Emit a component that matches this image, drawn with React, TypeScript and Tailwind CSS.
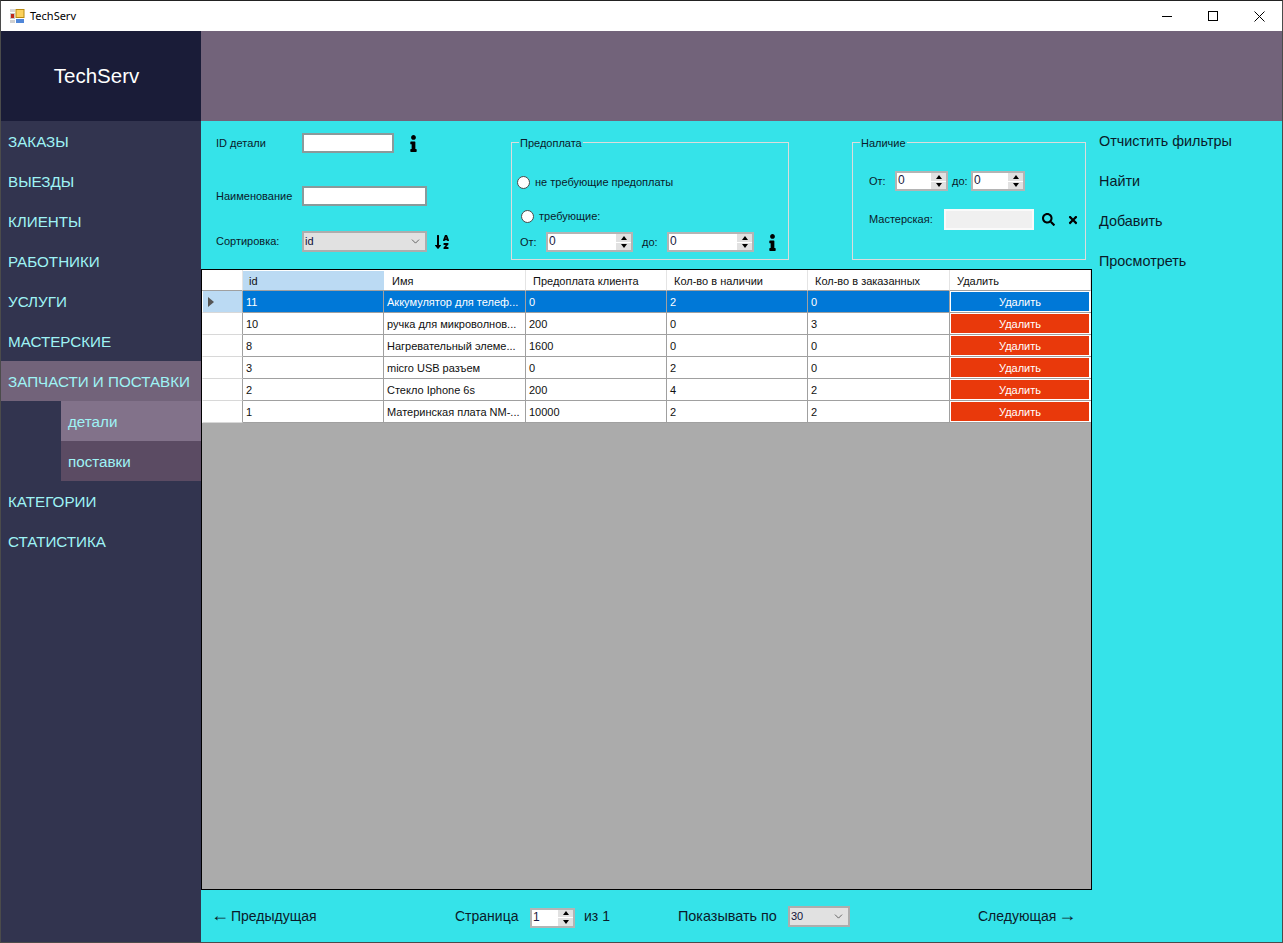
import { FaInfo, FaSearch, FaSortAlphaDown, FaTimes } from "react-icons/fa";
import { ChevronDown } from "lucide-react";

const navTop = ["ЗАКАЗЫ", "ВЫЕЗДЫ", "КЛИЕНТЫ", "РАБОТНИКИ", "УСЛУГИ", "МАСТЕРСКИЕ"];

const rows = [
  { id: "11", name: "Аккумулятор для телеф...", prepay: "0", stock: "2", ordered: "0" },
  { id: "10", name: "ручка для микроволнов...", prepay: "200", stock: "0", ordered: "3" },
  { id: "8", name: "Нагревательный элеме...", prepay: "1600", stock: "0", ordered: "0" },
  { id: "3", name: "micro USB разъем", prepay: "0", stock: "2", ordered: "0" },
  { id: "2", name: "Стекло Iphone 6s", prepay: "200", stock: "4", ordered: "2" },
  { id: "1", name: "Материнская плата NM-...", prepay: "10000", stock: "2", ordered: "2" },
];

const headers = ["id", "Имя", "Предоплата клиента", "Кол-во в наличии", "Кол-во в заказанных", "Удалить"];

const Spinner = ({ value, className }: { value: string; className: string }) => (
  <div className={`flex h-[20px] border-2 border-[#b4b4b4] bg-white ${className}`}>
    <span className="flex-1 pl-[1px] text-[12px] leading-[15px] text-[#1a1a40]">{value}</span>
    <div className="flex w-[15px] flex-col gap-[1px] bg-white">
      <div className="flex flex-1 items-center justify-center bg-[#e1e1e1]">
        <div className="h-0 w-0 border-x-[3.5px] border-b-[4px] border-x-transparent border-b-black" />
      </div>
      <div className="flex flex-1 items-center justify-center bg-[#e1e1e1]">
        <div className="h-0 w-0 border-x-[3.5px] border-t-[4px] border-x-transparent border-t-black" />
      </div>
    </div>
  </div>
);

const Select = ({ value, className }: { value: string; className: string }) => (
  <div className={`flex items-center justify-between border-2 border-[#adadad] bg-[#e1e1e1] pl-[1px] pr-[3px] text-[11px] text-[#10103a] ${className}`}>
    <span>{value}</span>
    <ChevronDown size={13} strokeWidth={1.3} className="text-[#333]" />
  </div>
);

const Radio = () => <div className="h-[13px] w-[13px] rounded-full border border-[#4a4a4a] bg-white" />;

const WindowIcon = () => (
  <svg width="15" height="14" viewBox="0 0 15 14">
    <rect x="0" y="0" width="5" height="3" fill="#d8d8d8" />
    <rect x="0" y="4" width="5" height="6" fill="#c8c8c8" />
    <rect x="1" y="5" width="3" height="4" fill="#c0281c" />
    <rect x="0" y="11" width="5" height="3" fill="#d0d0d0" />
    <rect x="5.5" y="0" width="9" height="9" fill="#b88a10" />
    <rect x="6.5" y="1" width="7" height="7" fill="#fbd15c" />
    <rect x="6" y="10" width="8" height="4" fill="#4f86d8" />
  </svg>
);

export default function App() {
  return (
    <div className="flex h-[943px] w-[1283px] flex-col overflow-hidden border border-t-[1px] border-[#4b4b4b] border-t-[#222] bg-white font-['Liberation_Sans',sans-serif]">
      {/* title bar */}
      <div className="flex h-[30px] shrink-0 items-center bg-white pl-[9px]">
        <WindowIcon />
        <span className="ml-[5px] font-['Noto_Sans',sans-serif] text-[11px] text-black">TechServ</span>
        <div className="ml-auto flex h-full">
          <div className="flex w-[46px] items-center justify-center">
            <div className="h-[1px] w-[10px] bg-black" />
          </div>
          <div className="flex w-[46px] items-center justify-center">
            <div className="h-[10px] w-[10px] border border-black" />
          </div>
          <div className="flex w-[46px] items-center justify-center">
            <svg width="11" height="11" viewBox="0 0 11 11" stroke="#000" strokeWidth="1">
              <path d="M0.5 0.5 L10.5 10.5 M10.5 0.5 L0.5 10.5" />
            </svg>
          </div>
        </div>
      </div>

      <div className="flex min-h-0 flex-1">
        {/* sidebar */}
        <aside className="flex w-[200px] shrink-0 flex-col bg-[#32344f] text-[15.2px] text-[#9ff3f5]">
          <div className="flex h-[90px] items-center justify-center bg-[#1a1c38] pr-[9px] text-[20.5px] text-white">TechServ</div>
          {navTop.map((item) => (
            <div key={item} className="flex h-[40px] items-center pl-[7px] pt-[2px]">{item}</div>
          ))}
          <div className="flex h-[40px] items-center bg-[#72637a] pl-[7px] pt-[2px] whitespace-nowrap">ЗАПЧАСТИ И ПОСТАВКИ</div>
          <div className="ml-[60px] flex h-[40px] items-center bg-[#82728a] pl-[7px] pt-[2px]">детали</div>
          <div className="ml-[60px] flex h-[40px] items-center bg-[#5b4b63] pl-[7px] pt-[2px]">поставки</div>
          <div className="flex h-[40px] items-center pl-[7px] pt-[2px]">КАТЕГОРИИ</div>
          <div className="flex h-[40px] items-center pl-[7px] pt-[2px]">СТАТИСТИКА</div>
        </aside>

        <div className="flex min-w-0 flex-1 flex-col">
          <div className="h-[90px] shrink-0 bg-[#72637a]" />

          <div className="flex min-h-0 flex-1 bg-[#35e3e9]">
            <div className="flex w-[891px] shrink-0 flex-col">
              {/* filters */}
              <div className="flex h-[148px] shrink-0 text-[11px] text-[#0a1a2a]">
                <div className="ml-[15px] flex w-[295px] shrink-0 flex-col pt-[12px]">
                  <div className="flex h-[20px] items-center">
                    <span className="w-[86px]">ID детали</span>
                    <div className="h-[20px] w-[92px] border-2 border-[#8a9a9b] bg-white" />
                    <FaInfo size={17} className="ml-[11px] text-black" />
                  </div>
                  <div className="mt-[33px] flex h-[20px] items-center">
                    <span className="w-[86px]">Наименование</span>
                    <div className="h-[20px] w-[125px] border-2 border-[#8a9a9b] bg-white" />
                  </div>
                  <div className="mt-[25px] flex h-[21px] items-center">
                    <span className="w-[86px]">Сортировка:</span>
                    <Select value="id" className="h-[21px] w-[125px]" />
                    <FaSortAlphaDown size={16} className="ml-[7px] text-black" />
                  </div>
                </div>

                <fieldset className="mt-[15px] h-[124px] w-[278px] shrink-0 border border-[#dcdcdc] px-[5px]">
                  <legend className="relative top-[1px] ml-[2px] px-[1px] leading-[13px]">Предоплата</legend>
                  <div className="mt-[26px] flex h-[14px] items-center gap-[5px]">
                    <Radio />
                    <span>не требующие предоплаты</span>
                  </div>
                  <div className="mt-[20px] ml-[4px] flex h-[14px] items-center gap-[5px]">
                    <Radio />
                    <span>требующие:</span>
                  </div>
                  <div className="mt-[9px] ml-[3px] flex h-[20px] items-center">
                    <span className="w-[26px]">От:</span>
                    <Spinner value="0" className="w-[87px]" />
                    <span className="ml-[9px] w-[25px]">до:</span>
                    <Spinner value="0" className="w-[87px]" />
                    <FaInfo size={17} className="ml-[10px] text-black" />
                  </div>
                </fieldset>

                <fieldset className="mt-[15px] ml-[63px] h-[124px] w-[234px] shrink-0 border border-[#dcdcdc] pl-[16px]">
                  <legend className="relative top-[1px] -ml-[9px] px-[1px] leading-[13px]">Наличие</legend>
                  <div className="mt-[22px] flex h-[20px] items-center">
                    <span className="w-[26px]">От:</span>
                    <Spinner value="0" className="w-[53px]" />
                    <span className="ml-[4px] w-[19px]">до:</span>
                    <Spinner value="0" className="w-[54px]" />
                  </div>
                  <div className="mt-[18px] flex h-[21px] items-center">
                    <span className="w-[75px]">Мастерская:</span>
                    <div className="h-[21px] w-[90px] border-2 border-[#fafafa] bg-[#f0f0f0]" />
                    <FaSearch size={13} className="ml-[8px] text-black" />
                    <FaTimes size={12} className="ml-[12px] text-black" />
                  </div>
                </fieldset>
              </div>

              {/* data grid */}
              <div className="h-[621px] shrink-0 border border-black bg-[#ababab]">
                <div className="grid grid-cols-[41px_141px_142px_141px_141px_142px_141px] text-[11px] text-[#101010]">
                  <div className="h-[21px] border-r border-b border-r-[#e4e4e4] border-b-[#a0a0a0] bg-white" />
                  {headers.map((h, i) => (
                    <div key={h} className="h-[21px] bg-white">
                      {i === 0 ? (
                        <div className="mt-[1px] h-[20px] border-b border-[#a0a0a0] bg-[#bbdaf3] pl-[6px] leading-[21px]">{h}</div>
                      ) : (
                        <div className={`h-[21px] border-r border-b border-r-[#e4e4e4] border-b-[#a0a0a0] leading-[23px] ${i === 1 ? "pl-[8px]" : "pl-[7px]"}`}>{h}</div>
                      )}
                    </div>
                  ))}
                  {rows.map((r, i) => {
                    const sel = i === 0;
                    const cell = sel
                      ? "h-[22px] border-r border-b border-[#a0a0a0] bg-[#0078d7] pl-[3px] leading-[22px] text-white truncate"
                      : "h-[22px] border-r border-b border-[#a0a0a0] bg-white pl-[3px] leading-[22px] truncate";
                    return [
                      <div
                        key={r.id + "h"}
                        className={`flex h-[22px] items-center border-r border-b border-l border-l-white border-r-[#a0a0a0] border-b-[#d8d8d8] pl-[5px] ${sel ? "bg-[#bbdaf3]" : "bg-white"}`}
                      >
                        {sel && <div className="h-0 w-0 border-y-[5px] border-l-[6px] border-y-transparent border-l-[#555]" />}
                      </div>,
                      <div key={r.id + "a"} className={cell}>{r.id}</div>,
                      <div key={r.id + "b"} className={cell}>{r.name}</div>,
                      <div key={r.id + "c"} className={cell}>{r.prepay}</div>,
                      <div key={r.id + "d"} className={cell}>{r.stock}</div>,
                      <div key={r.id + "e"} className={cell}>{r.ordered}</div>,
                      <div key={r.id + "f"} className="h-[22px] border-b border-[#a0a0a0] bg-white p-[1px] pr-[2px]">
                        <div className={`flex h-full items-center justify-center pt-[1px] text-white ${sel ? "bg-[#0078d7]" : "bg-[#e9390b]"}`}>Удалить</div>
                      </div>,
                    ];
                  })}
                </div>
              </div>

              {/* pager */}
              <div className="flex min-h-0 flex-1 items-center pt-[1px] text-[14px] text-[#0a1a2a]">
                <span className="ml-[10px] flex w-[244px] items-center whitespace-nowrap">
                  <span className="relative -top-[2px] -mr-[3px] text-[18px] leading-none">←</span>
                  <span className="ml-[5px]">Предыдущая</span>
                </span>
                <span className="w-[75px]">Страница</span>
                <Spinner value="1" className="mt-[2px] w-[45px]" />
                <span className="ml-[9px] w-[94px]">из 1</span>
                <span className="w-[110px] whitespace-nowrap text-[14.4px]">Показывать по</span>
                <Select value="30" className="h-[21px] w-[62px]" />
                <span className="ml-[128px] flex items-center whitespace-nowrap">
                  Следующая
                  <span className="relative -top-[2px] ml-[2px] text-[18px] leading-none">→</span>
                </span>
              </div>
            </div>

            {/* actions */}
            <div className="flex flex-col pl-[7px] text-[14.4px] text-[#0a1a2a]">
              <div className="flex h-[40px] items-center pt-[2px]">Отчистить фильтры</div>
              <div className="flex h-[40px] items-center pt-[2px]">Найти</div>
              <div className="flex h-[40px] items-center pt-[2px]">Добавить</div>
              <div className="flex h-[40px] items-center pt-[2px]">Просмотреть</div>
            </div>
          </div>
        </div>
      </div>
    </div>
  );
}
